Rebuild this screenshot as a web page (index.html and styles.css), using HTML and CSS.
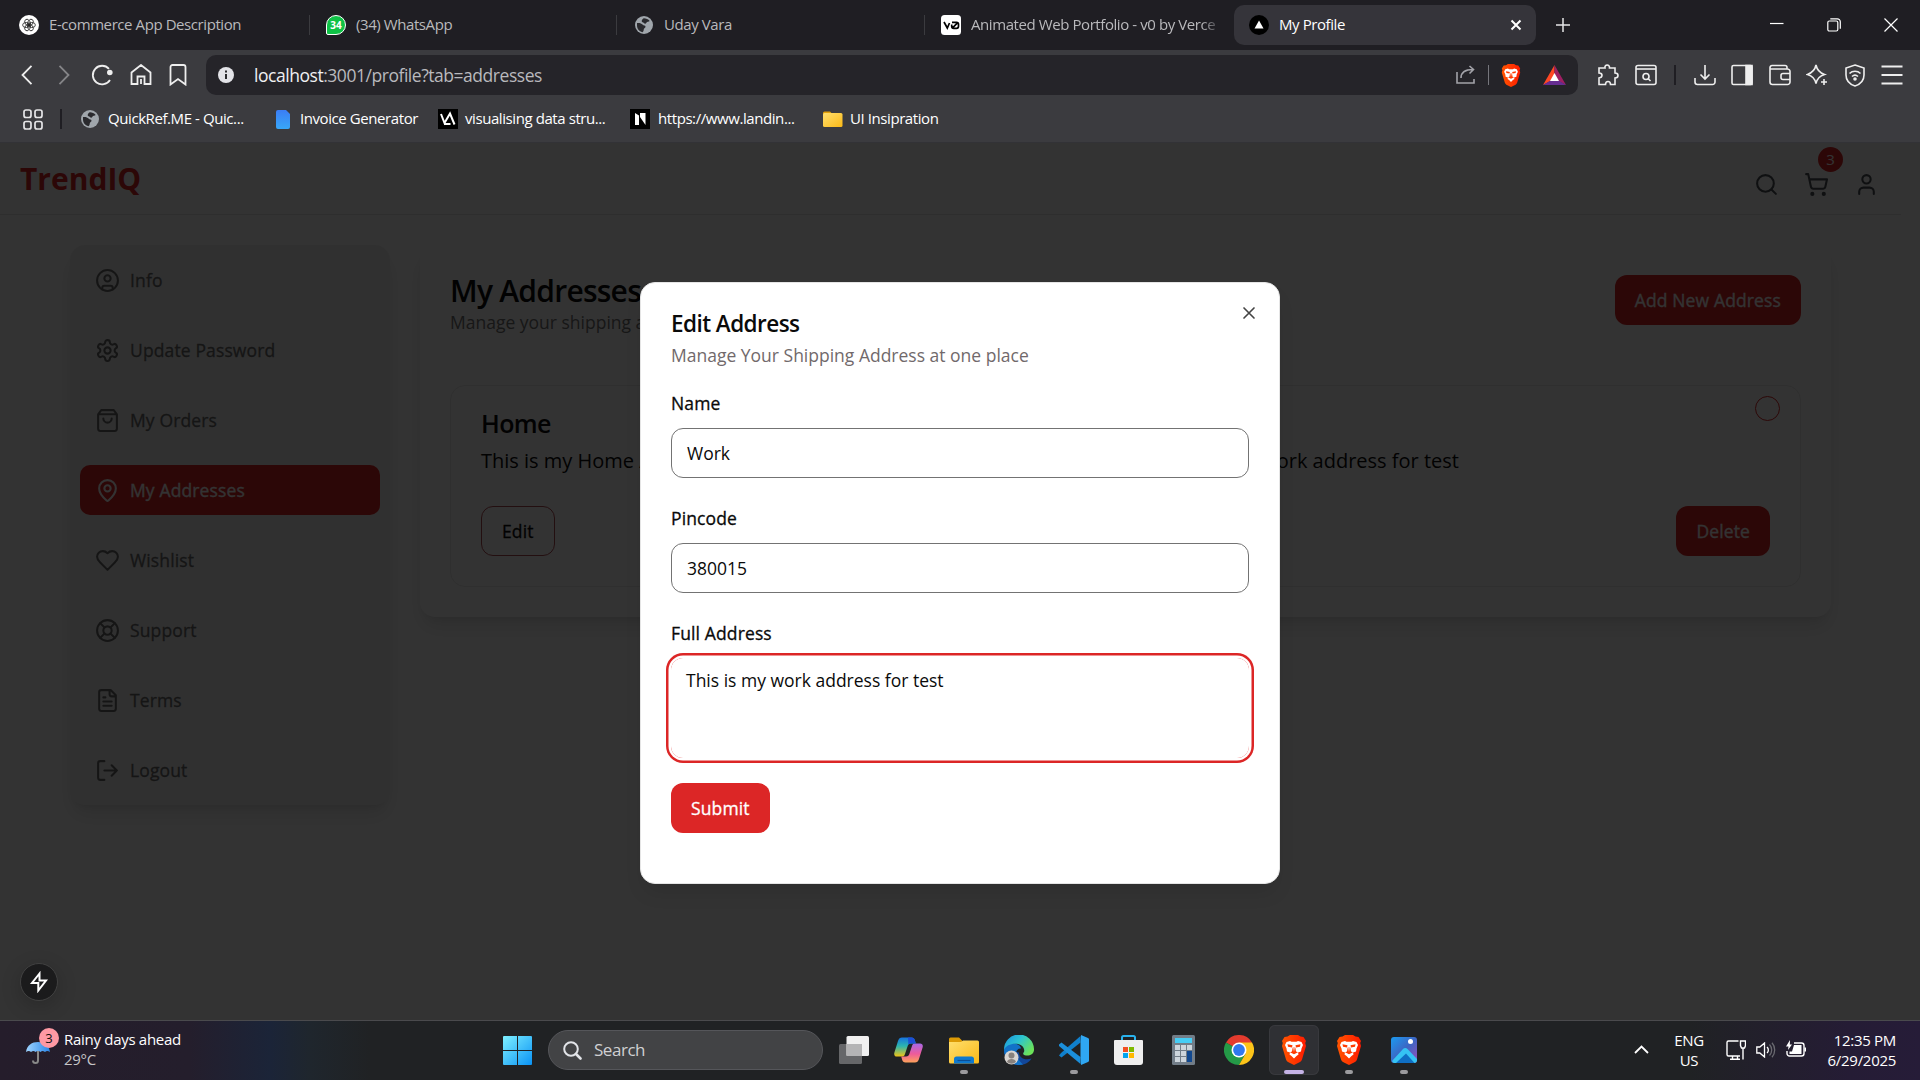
FILE: index.html
```html
<!DOCTYPE html>
<html lang="en">
<head>
<meta charset="utf-8">
<title>My Profile</title>
<link rel="stylesheet" href="styles.css">
</head>
<body>
<svg class="defs" width="0" height="0">
  <defs>
    <linearGradient id="brave" x1="0" x2="1"><stop offset="0" stop-color="#ff5500"/><stop offset="1" stop-color="#ff1b00"/></linearGradient>
    <linearGradient id="win" x1="0" y1="0" x2="1" y2="1"><stop offset="0" stop-color="#7ef0ff"/><stop offset="1" stop-color="#0a93f5"/></linearGradient>
    <linearGradient id="folder" x1="0" y1="0" x2="1" y2="1"><stop offset="0" stop-color="#ffdf6e"/><stop offset="1" stop-color="#fbb917"/></linearGradient>
    <linearGradient id="sheet" x1="0" y1="0" x2="0" y2="1"><stop offset="0" stop-color="#3b7df5"/><stop offset="1" stop-color="#38a7f8"/></linearGradient>
    <linearGradient id="copA" x1="0" y1="0" x2="0" y2="1"><stop offset="0" stop-color="#1673e0"/><stop offset=".45" stop-color="#2bb5b0"/><stop offset="1" stop-color="#f0c414"/></linearGradient>
    <linearGradient id="copB" x1="0" y1="0" x2="0" y2="1"><stop offset="0" stop-color="#a868e8"/><stop offset=".55" stop-color="#ee5b9a"/><stop offset="1" stop-color="#fda25a"/></linearGradient>
    <linearGradient id="edgeA" x1="0" y1="0" x2="1" y2=".6"><stop offset="0" stop-color="#1a8fe0"/><stop offset=".5" stop-color="#2cc4d0"/><stop offset="1" stop-color="#6be25a"/></linearGradient>
    <linearGradient id="photo" x1="0" y1="0" x2="1" y2="1"><stop offset="0" stop-color="#1b9bf0"/><stop offset=".5" stop-color="#3c66c4"/><stop offset="1" stop-color="#9a4fb8"/></linearGradient>
    <linearGradient id="brolly" x1="0" x2="1"><stop offset="0" stop-color="#9fd4ff"/><stop offset="1" stop-color="#2a86e8"/></linearGradient>
    <symbol id="lion" viewBox="0 0 26 30">
      <path fill="url(#brave)" d="M6.500 1.500 9 0h8l2.500 1.500L22.500 2 25 6l-.8 2 .8 3-4 13.500a5 5 0 0 1-2 2.500L13 30l-6-3a5 5 0 0 1-2-2.500L1 11l.8-3L1 6l2.500-4z"/>
      <path fill="#fff" d="M5.500 7 9 6l1.500.8h5L17 6l3.500 1L22 10l-1.500 3.500-.5 3-3 1 .5 2-2 1.500L13 23.500 10.500 21l-2-1.500.5-2-3-1-.5-3L4 10z"/>
      <path fill="#ff3a00" d="m6.500 9.300 5 1L11 12.500l-4-.8zM19.500 9.300l-5 1 .5 2.200 4-.8zM11.700 12.500h2.600l.7 4 2 .7-2 1.100-2 1-2-1-2-1.100 2-.7z"/>
      <path fill="#fff" d="m12.300 12.500.7 4.500.7-4.500z"/>
    </symbol>
    <symbol id="globe" viewBox="0 0 18 18">
      <circle cx="9" cy="9" r="9" fill="#a0a6ac"/>
      <path fill="#2a2a2e" d="M2 7c2.500-.3 4.500.2 5.500 1.500s2.800.6 3 2-1.800 1.800-1.800 3.200c0 1-.5 2-1.200 2.500C4 15.500 2 12.500 2 9.500zM9 2.300c1.800 0 4.500.9 5.700 2.800-1 .9-2.700.6-3.300 1.700S9.600 8 8.900 7 6.500 6.200 6.700 4.900 8 2.600 9 2.300z"/>
    </symbol>
  </defs>
</svg>

<header class="browser">
  <div class="tabs">
    <div class="tab t1">
      <svg width="20" height="20" viewBox="0 0 20 20"><circle cx="10" cy="10" r="10" fill="#fff"/><g fill="none" stroke="#222" stroke-width=".8"><ellipse cx="10" cy="7.200" rx="2.500" ry="3.600" transform="rotate(30 10 10)"/><ellipse cx="10" cy="7.200" rx="2.500" ry="3.600" transform="rotate(90 10 10)"/><ellipse cx="10" cy="7.200" rx="2.500" ry="3.600" transform="rotate(150 10 10)"/><ellipse cx="10" cy="7.200" rx="2.500" ry="3.600" transform="rotate(210 10 10)"/><ellipse cx="10" cy="7.200" rx="2.500" ry="3.600" transform="rotate(270 10 10)"/><ellipse cx="10" cy="7.200" rx="2.500" ry="3.600" transform="rotate(330 10 10)"/></g></svg>
      <span>E-commerce App Description</span>
    </div>
    <div class="tab t2">
      <b class="wa">34</b>
      <span>(34) WhatsApp</span>
    </div>
    <div class="tab t3">
      <svg width="18" height="18"><use href="#globe"/></svg>
      <span>Uday Vara</span>
    </div>
    <div class="tab t4">
      <svg width="20" height="20" viewBox="0 0 20 20"><rect width="20" height="20" rx="3.500" fill="#fff"/><path d="m3 7 3.300 6 2.200-5M11 7.300h4.500a2 2 0 0 1 2 2v2a2 2 0 0 1-2 2h-2.800a2 2 0 0 1-2-2V9.500M11.500 12.800l5-5" fill="none" stroke="#000" stroke-width="1.700"/></svg>
      <span class="fade">Animated Web Portfolio - v0 by Verce</span>
    </div>
    <div class="tab active">
      <svg width="20" height="20" viewBox="0 0 20 20"><circle cx="10" cy="10" r="10" fill="#000"/><path d="m10 5.500 4.500 8h-9z" fill="#fff"/></svg>
      <span>My Profile</span>
      <svg class="tab-close" width="12" height="12" viewBox="0 0 12 12"><path d="m1.500 1.500 9 9m0-9-9 9" stroke="#fff" stroke-width="2"/></svg>
    </div>
    <svg class="plus" width="14" height="14" viewBox="0 0 14 14"><path d="M7 0v14M0 7h14" stroke="#e6e6e8" stroke-width="1.500"/></svg>
    <div class="window-buttons">
      <svg width="14" height="14" viewBox="0 0 14 14"><path d="M0 5.500h13.500" stroke="#fff" stroke-width="1.200"/></svg>
      <svg width="14" height="14" viewBox="0 0 14 14"><g fill="none" stroke="#fff" stroke-width="1.200"><rect x=".8" y="3" width="10" height="10" rx="1.500"/><path d="M3.300.8h7a3 3 0 0 1 3 3v7"/></g></svg>
      <svg width="14" height="14" viewBox="0 0 14 14"><path d="m.5.500 13 13m0-13-13 13" stroke="#fff" stroke-width="1.200"/></svg>
    </div>
  </div>

  <div class="toolbar">
    <div class="nav">
      <svg width="20" height="20" viewBox="0 0 20 20"><path d="M14.500.8 5.500 10l9 9.200"/></svg>
      <svg class="dim" width="20" height="20" viewBox="0 0 20 20"><path d="m5.500.8 9 9.200-9 9.200"/></svg>
      <svg width="22" height="22" viewBox="0 0 22 22"><path d="M18 4.800A9.300 9.300 0 1 0 19 16"/><circle cx="18.800" cy="8.500" r="2.800" fill="#eee" stroke="none"/></svg>
      <svg width="22" height="22" viewBox="0 0 22 22"><path d="M1.500 8.500 11 1l9.500 7.500V20h-6v-7.500h-7V20h-6zM11 20v-5"/></svg>
      <svg width="18" height="22" viewBox="0 0 18 22"><path d="M1.500 20.500V3a2 2 0 0 1 2-2h11a2 2 0 0 1 2 2v17.500L9 15z"/></svg>
    </div>
    <div class="address">
      <svg width="16" height="16" viewBox="0 0 16 16"><circle cx="8" cy="8" r="8" fill="#e3e3e8"/><path d="M8 7v5M8 3.500v2" stroke="#2a2a2e" stroke-width="2"/></svg>
      <span class="url">localhost<i>:3001/profile?tab=addresses</i></span>
      <div class="address-actions">
        <svg class="line soft" width="20" height="20" viewBox="0 0 20 20"><path d="M1 7v11h17v-4M5 13c0-5 4-8.500 12-8.500M13.500 1l4 3.500-4 4"/></svg>
        <i class="sep"></i>
        <svg width="20" height="23" viewBox="0 0 26 30"><use href="#lion"/></svg>
        <svg width="23" height="20" viewBox="0 0 23 20"><path d="M11.500 0 0 20l11.500-6z" fill="#ff4724"/><path d="M11.500 0 23 20l-11.500-6z" fill="#9e1f63"/><path d="M0 20h23l-11.500-7z" fill="#662d91"/><path d="m11.500 8 4.500 8H7z" fill="#fff"/></svg>
      </div>
    </div>
    <div class="tools line">
      <svg width="22" height="22" viewBox="0 0 22 22"><path d="M2 4h6c-.8-4 5-4 4.500 0H18v5c4 0 4 5 0 5v6.500h-4.500c0-4-5-4-5 0H2V14c4-.5 4-5 0-5z"/></svg>
      <svg width="22" height="22" viewBox="0 0 22 22"><rect x="1" y="1.500" width="20" height="19" rx="2"/><path d="M1 5h20"/><circle cx="11" cy="12.500" r="3"/><path d="m13 14.500 2.500 2.500"/></svg>
      <i class="sep dark"></i>
      <svg width="22" height="22" viewBox="0 0 22 22"><path d="M11 1v14m-4.500-4.500L11 15l4.500-4.500M1 14v4a2.500 2.500 0 0 0 2.500 2.500h15A2.500 2.500 0 0 0 21 18v-4"/></svg>
      <svg width="22" height="22" viewBox="0 0 22 22"><rect x="1" y="1.500" width="20" height="19" rx="1.500"/><path d="M15 1.500h6v19h-6z" fill="#eee"/></svg>
      <svg width="22" height="22" viewBox="0 0 22 22"><path d="M18 5V3.500a2 2 0 0 0-2-2H3a2 2 0 0 0-2 2V18a2.500 2.500 0 0 0 2.500 2.500h15A2.500 2.500 0 0 0 21 18V7.500A2.500 2.500 0 0 0 18.500 5H1M21 9.500h-7a2 2 0 0 0-2 2v2a2 2 0 0 0 2 2h7"/></svg>
      <svg width="22" height="22" viewBox="0 0 22 22"><path d="M10 1c1 5 3 7.500 8.500 9.500-5 1.500-7.500 4-8.500 9-1-5-3.500-7.500-8.500-9C6.500 8.500 9 6 10 1zM18 15v6m-3-3h6"/></svg>
      <svg width="22" height="23" viewBox="0 0 22 23"><path d="m11 1 9 3v7c0 6-4.500 9.500-9 11-4.500-1.500-9-5-9-11V4zM5.500 9.500c3-3 8-3 11 0M8 12.500c1.800-1.600 4.200-1.600 6 0"/><circle cx="11" cy="15" r="1" fill="#eee"/></svg>
      <svg width="22" height="20" viewBox="0 0 22 20"><path d="M.5 1.500h21M.5 10h21M.5 18.500h21" stroke-width="2"/></svg>
    </div>
  </div>

  <div class="bookmarks">
    <svg class="apps" width="20" height="21" viewBox="0 0 20 21"><g fill="none" stroke="#e6e6e8" stroke-width="1.700"><rect x="1" y="1" width="7" height="7.500" rx="2"/><rect x="12" y="1" width="7" height="7.500" rx="2"/><rect x="1" y="12.500" width="7" height="7.500" rx="2"/><rect x="12" y="12.500" width="7" height="7.500" rx="2"/></g></svg>
    <i class="sep dark"></i>
    <div class="bm b1"><svg width="18" height="18"><use href="#globe"/></svg><span>QuickRef.ME - Quic...</span></div>
    <div class="bm b2"><svg width="14" height="19" viewBox="0 0 14 19"><path d="M2 0h8l4 4v13a2 2 0 0 1-2 2H2a2 2 0 0 1-2-2V2a2 2 0 0 1 2-2z" fill="url(#sheet)"/></svg><span>Invoice Generator</span></div>
    <div class="bm b3"><svg width="20" height="20" viewBox="0 0 20 20"><path d="M0 0h20v20H0z"/><path d="m3 5 3.500 9L12 4.500l4.500 11M6 15h6.500" fill="none" stroke="#fff" stroke-width="2"/></svg><span>visualising data stru...</span></div>
    <div class="bm b4"><svg width="20" height="20" viewBox="0 0 20 20"><path d="M0 0h20v20H0z"/><path d="M5 16V4l4 2.500V16zM10 4h5.500v12L10 8z" fill="#fff"/></svg><span>https://www.landin...</span></div>
    <div class="bm b5"><svg width="20" height="16" viewBox="0 0 20 16"><path d="M0 2a1.500 1.500 0 0 1 1.500-1.500H7L8.500 2v3H0z" fill="#e3a008"/><rect y="2" width="19.500" height="14" rx="1.500" fill="url(#folder)"/></svg><span>UI Insipration</span></div>
  </div>
</header>

<main class="page">
  <div class="site">
    <div class="site-header">
      <div class="logo">TrendIQ</div>
      <div class="header-icons stroke">
        <svg width="25" height="25" viewBox="0 0 24 24"><circle cx="11" cy="11" r="8"/><path d="m21 21-4.300-4.300"/></svg>
        <div class="cart">
          <svg width="25" height="25" viewBox="0 0 24 24"><circle cx="8" cy="21" r="1"/><circle cx="19" cy="21" r="1"/><path d="M2.050 2.050h2l2.660 12.420a2 2 0 0 0 2 1.580h9.780a2 2 0 0 0 1.950-1.570l1.650-7.430H5.120"/></svg>
          <span class="badge">3</span>
        </div>
        <svg width="25" height="25" viewBox="0 0 24 24"><path d="M19 21v-2a4 4 0 0 0-4-4H9a4 4 0 0 0-4 4v2"/><circle cx="12" cy="7" r="4"/></svg>
      </div>
    </div>
    <div class="columns">
      <nav class="sidebar stroke">
        <a><svg width="25" height="25" viewBox="0 0 24 24"><circle cx="12" cy="12" r="10"/><circle cx="12" cy="10" r="3"/><path d="M7 20.662V19a2 2 0 0 1 2-2h6a2 2 0 0 1 2 2v1.662"/></svg><span>Info</span></a>
        <a><svg width="25" height="25" viewBox="0 0 24 24"><path d="M12.220 2h-.44a2 2 0 0 0-2 2v.18a2 2 0 0 1-1 1.730l-.43.25a2 2 0 0 1-2 0l-.15-.08a2 2 0 0 0-2.730.73l-.22.38a2 2 0 0 0 .73 2.730l.15.1a2 2 0 0 1 1 1.720v.51a2 2 0 0 1-1 1.740l-.15.09a2 2 0 0 0-.73 2.730l.22.38a2 2 0 0 0 2.730.73l.15-.08a2 2 0 0 1 2 0l.43.25a2 2 0 0 1 1 1.730V20a2 2 0 0 0 2 2h.44a2 2 0 0 0 2-2v-.18a2 2 0 0 1 1-1.730l.43-.25a2 2 0 0 1 2 0l.15.08a2 2 0 0 0 2.730-.73l.22-.39a2 2 0 0 0-.73-2.730l-.15-.08a2 2 0 0 1-1-1.740v-.5a2 2 0 0 1 1-1.740l.15-.09a2 2 0 0 0 .73-2.730l-.22-.38a2 2 0 0 0-2.730-.73l-.15.08a2 2 0 0 1-2 0l-.43-.25a2 2 0 0 1-1-1.730V4a2 2 0 0 0-2-2z"/><circle cx="12" cy="12" r="3"/></svg><span>Update Password</span></a>
        <a><svg width="25" height="25" viewBox="0 0 24 24"><path d="M6 2 3 6v14a2 2 0 0 0 2 2h14a2 2 0 0 0 2-2V6l-3-4ZM3 6h18M16 10a4 4 0 0 1-8 0"/></svg><span>My Orders</span></a>
        <a class="current"><svg width="25" height="25" viewBox="0 0 24 24"><path d="M20 10c0 4.993-5.539 10.193-7.399 11.799a1 1 0 0 1-1.202 0C9.539 20.193 4 14.993 4 10a8 8 0 0 1 16 0"/><circle cx="12" cy="10" r="3"/></svg><span>My Addresses</span></a>
        <a><svg width="25" height="25" viewBox="0 0 24 24"><path d="M19 14c1.490-1.460 3-3.210 3-5.500A5.500 5.500 0 0 0 16.500 3c-1.760 0-3 .5-4.500 2-1.500-1.500-2.740-2-4.500-2A5.500 5.500 0 0 0 2 8.500c0 2.300 1.500 4.050 3 5.500l7 7Z"/></svg><span>Wishlist</span></a>
        <a><svg width="25" height="25" viewBox="0 0 24 24"><circle cx="12" cy="12" r="10"/><circle cx="12" cy="12" r="4"/><path d="m4.930 4.930 4.240 4.240M14.830 9.170l4.240-4.240M14.830 14.830l4.240 4.240M9.170 14.830l-4.240 4.240"/></svg><span>Support</span></a>
        <a><svg width="25" height="25" viewBox="0 0 24 24"><path d="M15 2H6a2 2 0 0 0-2 2v16a2 2 0 0 0 2 2h12a2 2 0 0 0 2-2V7ZM14 2v4a2 2 0 0 0 2 2h4M10 9H8M16 13H8M16 17H8"/></svg><span>Terms</span></a>
        <a><svg width="25" height="25" viewBox="0 0 24 24"><path d="M9 21H5a2 2 0 0 1-2-2V5a2 2 0 0 1 2-2h4M16 17l5-5-5-5M21 12H9"/></svg><span>Logout</span></a>
      </nav>
      <section class="panel">
        <div class="panel-head">
          <div>
            <h1>My Addresses</h1>
            <p class="muted">Manage your shipping addresses</p>
          </div>
          <button class="primary">Add New Address</button>
        </div>
        <article class="address-card">
          <div class="card-head"><h2>Home</h2><i class="radio"></i></div>
          <p class="lines"><span>This is my Home Address</span><span>This is my work address for test</span></p>
          <div class="card-actions"><button class="outline">Edit</button><button class="primary">Delete</button></div>
        </article>
      </section>
    </div>
  </div>

  <div class="overlay">
    <form class="dialog">
      <svg class="dialog-close" width="20" height="20" viewBox="0 0 24 24"><path d="M18 6 6 18M6 6l12 12"/></svg>
      <h3>Edit Address</h3>
      <p class="hint">Manage Your Shipping Address at one place</p>
      <div class="field"><label>Name</label><div class="input">Work</div></div>
      <div class="field"><label>Pincode</label><div class="input">380015</div></div>
      <div class="field"><label>Full Address</label><div class="input area focused">This is my work address for test</div></div>
      <button type="button" class="primary submit">Submit</button>
    </form>
  </div>

  <div class="dev-badge"><svg width="20" height="22" viewBox="0 0 20 22"><path d="M10.500 2.500 3 12h6.300v7.500L17 9.500h-6.500z"/></svg></div>
</main>

<footer class="taskbar">
  <div class="weather">
    <div class="brolly">
      <svg width="24" height="24" viewBox="0 0 24 24"><path d="M0 12C1 5 6 2 12 2s11 3 12 10c-2-1.300-3.500-1.300-5 0-2-1.300-3-1.300-4.500 0-1.800-1.300-3.200-1.300-5 0-1.500-1.300-2.700-1.300-4.500 0-1.500-1.300-3-1.300-5 0z" fill="url(#brolly)"/><path d="M12 11v9.500a2.500 2.500 0 0 1-5 0" fill="none" stroke="#888" stroke-width="2"/></svg>
      <span class="count">3</span>
    </div>
    <div class="weather-text">Rainy days ahead<br><em>29°C</em></div>
  </div>

  <div class="dock">
    <svg class="start" width="29" height="29" viewBox="0 0 29 29"><path d="M1 0h13v14H0V1a1 1 0 0 1 1-1zM15 0h13a1 1 0 0 1 1 1v13H15zM0 15h14v14H1a1 1 0 0 1-1-1zM15 15h14v13a1 1 0 0 1-1 1H15z" fill="url(#win)"/></svg>
    <div class="search"><svg width="19" height="19" viewBox="0 0 19 19"><circle cx="8" cy="8" r="6.800" fill="none" stroke="#e2e4e8" stroke-width="2"/><path d="m13 13 4.500 4.500" stroke="#e2e4e8" stroke-width="2.600" stroke-linecap="round"/></svg><span>Search</span></div>
    <div class="app"><svg width="30" height="28" viewBox="0 0 30 28"><rect y="8" width="23" height="20" rx="1.500" fill="#666769"/><rect x="7.500" width="22.500" height="20" rx="1.500" fill="#f0f0f0"/><path d="M7.500 8H23v12H7.500z" fill="#b4b4b5"/></svg></div>
    <div class="app"><svg width="29" height="26" viewBox="0 0 29 26"><path d="M8 .5h9.500c2 0 2.800 1 3.300 2.500l1 3.500H17c-2 0-3 1-3.500 3L11 17c-.6 2-1.500 2.500-3 2.500H3C.8 19.500-.3 18 .4 15.500L4 4C4.800 1.500 6 .5 8 .5z" fill="url(#copA)"/><path d="M21 25.500h-9.500c-2 0-2.800-1-3.300-2.500l-1-3.500H12c2 0 3-1 3.500-3L18 9c.6-2 1.500-2.500 3-2.500h5c2.200 0 3.300 1.500 2.600 4L25 22c-.8 2.500-2 3.500-4 3.500z" fill="url(#copB)"/><path d="M14 .5h3.500c2 0 2.800 1 3.300 2.500l1 3.500H17c-1.200 0-2 .4-2.600 1.200z" fill="#1c4fd6"/></svg></div>
    <div class="app run"><svg width="30" height="27" viewBox="0 0 30 27"><path d="M0 2A1.500 1.500 0 0 1 1.500.5H10L13 3.500V8H0z" fill="#dc9a05"/><path d="M0 5h12l2-1.500h14.500A1.500 1.500 0 0 1 30 5v20a1.500 1.500 0 0 1-1.500 1.500h-27A1.500 1.500 0 0 1 0 25z" fill="url(#folder)"/><path d="M5 26.500V22a2.500 2.500 0 0 1 2.500-2.500h15A2.500 2.500 0 0 1 25 22v4.500z" fill="#0f79cf"/><path d="M8.500 23.500h13" stroke="#0a4f96" stroke-width="1.200"/></svg></div>
    <div class="app"><svg width="30" height="30" viewBox="0 0 30 30"><path d="M0 15c0 9 7 15 15 15 6 0 10-2.500 12.500-6.500-7 2.500-12.500-1-12.500-6z" fill="#12479a"/><path d="M0 15c1-5 6-7.500 11-6.500 4 .8 6 3 6 5-5-.5-7 6-2 11.500 1.500 2 3 4 4 4.500C8 32 0 24 0 15z" fill="#1272c8"/><path d="M0 15A15 15 0 0 1 30 14c.3 5-4 7-8 6.500-3-.4-3.500-2-2-3.500 1-3-1-7-6-8C8 8 2 10 0 15z" fill="url(#edgeA)"/><circle cx="7.500" cy="22.500" r="7" fill="#d8d5d2"/><circle cx="7.500" cy="20.500" r="3" fill="#87817d"/><path d="M3 27c.5-4 8.500-4 9 0a7 7 0 0 1-9 0z" fill="#87817d"/></svg></div>
    <div class="app run"><svg width="30" height="30" viewBox="0 0 30 30"><path d="m0 20.500 2.500 2 19-15V1L2 18z" fill="#1080cc"/><path d="M0 9.500 2.500 7.500 21.500 22v7L0 11z" fill="#1b8fdb"/><path d="M22 0 21.500 8v14l.5 8 7-3a2 2 0 0 0 1-2V5a2 2 0 0 0-1-2z" fill="#2fa7f3"/></svg></div>
    <div class="app"><svg width="29" height="30" viewBox="0 0 29 30"><path d="M8 6V2.500A1.500 1.500 0 0 1 9.500 1h10A1.500 1.500 0 0 1 21 2.500V6" fill="none" stroke="#29b3ee" stroke-width="2"/><path d="M0 6a1 1 0 0 1 1-1h27a1 1 0 0 1 1 1v21a3 3 0 0 1-3 3H3a3 3 0 0 1-3-3z" fill="#efefef"/><path d="M9 12h5v5H9z" fill="#f25022"/><path d="M15 12h5v5h-5z" fill="#7fba00"/><path d="M9 18h5v5H9z" fill="#00a4ef"/><path d="M15 18h5v5h-5z" fill="#ffb900"/></svg></div>
    <div class="app"><svg width="23" height="30" viewBox="0 0 23 30"><rect width="23" height="30" rx="1.500" fill="#727d88"/><path d="M3 3h17v5H3z" fill="#46cdf5"/><path d="M3 10h5v5H3zM9 10h5v5H9zM15 10h5v5h-5zM3 16h5v5H3zM9 16h5v5H9zM3 22h5v5H3zM9 22h5v5H9z" fill="#cdd5dc"/><path d="M15 16h5v11h-5z" fill="#11488f"/></svg></div>
    <div class="app"><svg width="30" height="30" viewBox="0 0 30 30"><path d="M15 15 2 7.500a15 15 0 0 1 26 0z" fill="#e33b2e"/><path d="M15 15 2 7.500A15 15 0 0 0 15 30l6.500-11.300z" fill="#249a47"/><path d="M28 7.500H15L21.500 18.700 15 30A15 15 0 0 0 28 7.500z" fill="#fcc419"/><circle cx="15" cy="15" r="7.500" fill="#fff"/><circle cx="15" cy="15" r="5.900" fill="#3078ee"/></svg></div>
    <div class="app run focus"><svg width="26" height="30"><use href="#lion"/></svg></div>
    <div class="app run"><svg width="26" height="30"><use href="#lion"/></svg></div>
    <div class="app run"><svg width="26" height="26" viewBox="0 0 26 26"><rect width="26" height="26" rx="3" fill="url(#photo)"/><path d="M1 24 12 12a3 3 0 0 1 4.500 0L26 22v1a3 3 0 0 1-3 3H3a3 3 0 0 1-2-2z" fill="#35c3f3"/><path d="m5 26 10-9.500L23.500 26z" fill="#0f6fc4"/><circle cx="19.500" cy="4.500" r="2.500" fill="#fff"/></svg></div>
  </div>

  <div class="tray">
    <svg class="chev" width="15" height="9" viewBox="0 0 15 9"><path d="m1 8 6.500-6.500L14 8" fill="none" stroke="#fff" stroke-width="1.800"/></svg>
    <div class="lang">ENG<br>US</div>
    <svg class="net" width="20" height="20" viewBox="0 0 20 20"><g fill="none" stroke="#fff" stroke-width="1.400"><path d="M12.500 1H2.500A1.500 1.500 0 0 0 1 2.500v12A1.500 1.500 0 0 0 2.500 16H14M4 19.300h10M6.500 16v3M11.500 16v3M17 8v11.500"/><path d="M14.500 1h5v4.500L18.500 8h-3l-1-2.500z"/></g></svg>
    <svg class="vol" width="20" height="16" viewBox="0 0 20 16"><g fill="none" stroke="#fff" stroke-width="1.300"><path d="M.8 5v6h3L8.500 15V1L3.800 5zM11 5a4 4 0 0 1 0 6"/><path d="M13.500 2.500a8 8 0 0 1 0 11M16 .8a11 11 0 0 1 0 14.400" stroke="#6a6a70"/></g></svg>
    <svg class="bat" width="20" height="17" viewBox="0 0 20 17"><path d="M8 3h7.500A2.500 2.500 0 0 1 18 5.500v8a2.500 2.500 0 0 1-2.500 2.500H3.500A2.500 2.500 0 0 1 1 13.500V11" fill="none" stroke="#fff" stroke-width="1.400"/><path d="M8 5h7.500v9H3.500v-2.500H6zM4 0 0 6.500h2.500L2 10l4-5.500H3.800zM18.500 7.500H20v4h-1.500z" fill="#fff"/></svg>
    <div class="clock">12:35 PM<br>6/29/2025</div>
  </div>
</footer>
</body>
</html>
```
FILE: styles.css
```css
* { box-sizing: border-box; margin: 0; }
body {
  width: 1920px; height: 1080px; overflow: hidden;
  display: flex; flex-direction: column;
  font-family: "Open Sans", "Noto Sans", sans-serif;
  color: #0a0a0a; background: #333;
}
svg { display: block; flex: none; }
i, em { font-style: normal; }
button { font: inherit; }
.defs { position: absolute; }

/* Browser chrome */
.browser { flex: none; height: 143px; background: #3b3b3f; border-bottom: 1px solid #323236; font-size: 15px; letter-spacing: -.42px; white-space: nowrap; }
.tabs { display: flex; height: 50px; background: #1f1e23; align-items: center; color: #b9b9bc; }
.tab { display: flex; align-items: center; gap: 10px; height: 20px; line-height: 20px; border-right: 1px solid #3b3b3f; }
.tab > span { padding-bottom: 2px; }
.t1 { width: 310px; padding-left: 19px; }
.t2 { width: 307px; padding-left: 16px; }
.t3 { width: 308px; padding-left: 18px; gap: 11px; }
.t4 { width: 309px; padding-left: 16px; border: 0; }
.fade { width: 250px; mask-image: linear-gradient(90deg, #000 230px, transparent 252px); }
.tab.active { width: 302px; height: 40px; border: 0; border-radius: 10px; background: #35343a; color: #fff; padding: 0 14px 0 15px; }
.tab-close { margin-left: auto; }
.wa { width: 20px; height: 20px; border-radius: 10px 10px 10px 2px; border: 1px solid #fff; background: #0fc246; color: #fff; font-size: 10px; font-weight: 700; letter-spacing: 0; text-align: center; line-height: 18px; }
.plus { margin-left: 20px; }
.window-buttons { display: flex; gap: 43px; margin-left: auto; margin-right: 22px; }

.toolbar { display: flex; height: 50px; align-items: center; }
.nav { display: flex; align-items: center; width: 206px; padding-left: 17px; gap: 17px; fill: none; stroke: #eee; stroke-width: 1.800; }
.nav .dim { stroke: #858588; }
.address { display: flex; align-items: center; width: 1372px; height: 40px; border-radius: 10px; background: #252429; padding: 0 12px; }
.url { font-size: 17.500px; letter-spacing: -.46px; color: #f0f0f2; margin-left: 20px; }
.url i { color: #b9b9bd; }
.address-actions { display: flex; align-items: center; gap: 12px; margin-left: auto; }
.address-actions svg:nth-of-type(3) { margin-left: 10px; }
.line { fill: none; stroke: #eee; stroke-width: 1.600; }
.soft { stroke: #a2a2a8; }
.sep { flex: none; width: 1px; height: 20px; background: #76767c; }
.sep.dark { width: 2px; background: #1f1e23; }
.tools { display: flex; align-items: center; gap: 15.500px; padding-left: 19px; }
.tools .sep { margin: 0 2px; }

.bookmarks { display: flex; align-items: center; height: 38px; padding-left: 23px; color: #fff; }
.bookmarks .sep { margin: 0 19px 0 17px; }
.bm { display: flex; align-items: center; line-height: 20px; gap: 8px; }
.bm span { padding-bottom: 2px; }
.b1 { width: 195px; gap: 9px; }
.b2 { width: 162px; gap: 10px; }
.b3 { width: 192px; gap: 7px; }
.b4 { width: 193px; }
.b5 { gap: 7px; }

/* Profile page */
.page { position: relative; flex: 1; background: #fff; overflow: hidden; }
.site { width: 1901px; font-size: 17.500px; }
.site-header { display: flex; justify-content: space-between; height: 72px; padding: 15px 22px 0 20px; border-bottom: 1px solid #e5e5e5; }
.logo { font-size: 30px; font-weight: 700; line-height: 42px; color: #dc2626; align-self: flex-start; }
.stroke svg { fill: none; stroke: currentColor; stroke-width: 2; stroke-linecap: round; stroke-linejoin: round; }
.header-icons { display: flex; gap: 25px; padding-top: 14px; color: #4b5058; }
.cart { position: relative; }
.badge { position: absolute; left: 14px; top: -25px; width: 25px; height: 25px; border-radius: 50%; background: #dc2626; color: #fff; font-size: 15px; line-height: 25px; text-align: center; }
.columns { display: flex; gap: 30px; padding: 30px 70px; align-items: flex-start; }
.sidebar, .panel { border-radius: 15px; box-shadow: 0 12px 19px -2px rgba(0,0,0,.1), 0 5px 8px -5px rgba(0,0,0,.1); }
.sidebar { display: flex; flex-direction: column; gap: 20px; width: 320px; padding: 10px; background: #f1f1f1; color: #6b6b6b; }
.sidebar a { display: flex; align-items: center; gap: 10px; height: 50px; padding: 0 15px; border-radius: 10px; }
.sidebar .current { background: #dc2626; color: #fff; }
/* Medium weight, drawn as a thin outline on the regular face */
.sidebar span, button, label { letter-spacing: .13px; -webkit-text-stroke: .3px currentColor; }
.panel { flex: 1; height: 372px; padding: 30px; background: #fff; }
.panel-head { display: flex; justify-content: space-between; height: 110px; align-items: flex-start; }
h1 { font-size: 30px; font-weight: 600; line-height: 31px; letter-spacing: -.75px; }
.muted { line-height: 25px; margin-top: 4px; color: #737373; }
button { height: 50px; border-radius: 12px; border: 0; padding: 0 20px; }
.primary { background: #dc2626; color: #fff; }
.outline { background: transparent; border: 1px solid #b04a52; color: #0a0a0a; }
.address-card { height: 202px; padding: 25px 30px 0; border: 1px solid #e8e8e8; border-radius: 15px; }
.card-head { display: flex; justify-content: space-between; height: 25px; }
h2 { font-size: 25px; font-weight: 600; line-height: 24px; letter-spacing: -.6px; }
.radio { width: 25px; height: 25px; margin: -15px -10px 0 0; border-radius: 50%; border: 1px solid #dc2626; }
.lines { display: flex; justify-content: space-between; width: 978px; margin-top: 10px; font-size: 20px; line-height: 30px; }
.card-actions { display: flex; justify-content: space-between; margin-top: 30px; }

.overlay { position: absolute; inset: 0; background: rgba(0,0,0,.8); display: grid; justify-content: center; align-content: start; padding-top: 139px; font-size: 17.500px; }
.dialog { position: relative; width: 640px; height: 602px; padding: 30px; background: #fff; border: 1px solid #e5e5e5; border-radius: 15px; box-shadow: 0 12px 19px -4px rgba(0,0,0,.1); }
.dialog-close { position: absolute; right: 20px; top: 20px; fill: none; stroke: #444; stroke-width: 2; stroke-linecap: round; }
h3 { font-size: 22.500px; font-weight: 600; line-height: 22.500px; letter-spacing: -.55px; }
.hint { margin: 7px 0 23px; line-height: 25px; color: #71696b; }
.field { margin-bottom: 28px; }
label { display: inline-block; line-height: 25px; margin-bottom: 12px; vertical-align: top; }
.input { height: 50px; border: 1px solid #737373; border-radius: 12px; padding: 0 15px; line-height: 48px; }
.area { height: 100px; line-height: 25px; padding: 9px 14px; }
.focused { border-color: transparent; box-shadow: 0 0 0 2.500px #fff, 0 0 0 5px #dc2626; }
.submit { margin-top: -3px; display: block; }

.dev-badge { position: absolute; left: 20px; top: 820px; width: 38px; height: 38px; border-radius: 50%; background: #1b1b1c; border: 1px solid #414141; display: grid; place-items: center; box-shadow: 0 5px 20px rgba(0,0,0,.2); }
.dev-badge svg { fill: none; stroke: #fff; stroke-width: 2; }

/* Taskbar */
.taskbar { flex: none; height: 60px; display: flex; border-top: 1px solid #4a4a4d; color: #fff; font-size: 15px; line-height: 20px; letter-spacing: -.29px; white-space: nowrap;
  background: linear-gradient(90deg, #251d2b 0, #241e2c 190px, #1b2438 270px, #1f262d 310px, #202224 370px, #202224 1690px, #251c35 1850px, #261c38 1920px); }
.weather { display: flex; width: 503px; padding: 8px 0 0 26px; gap: 14px; }
.brolly { position: relative; padding-top: 11px; }
.count { position: absolute; left: 13px; top: -1px; width: 20px; height: 20px; border-radius: 50%; background: #ff99a4; color: #111; text-align: center; font-size: 13px; letter-spacing: 0; }
.weather-text em { color: #c6c6c8; }
.dock { display: flex; align-items: center; width: 1100px; height: 58px; }
.search { display: flex; align-items: center; gap: 12px; width: 275px; height: 40px; margin: 0 3px 0 16px; padding-left: 14px; border-radius: 20px; background: #424345; border: 1px solid #55565a; font-size: 17px; letter-spacing: -.47px; color: #d0d0d2; }
.app { position: relative; width: 50px; height: 50px; margin: 0 2.500px; display: grid; place-items: center; border-radius: 6px; }
.run::after { content: ""; position: absolute; left: 21px; bottom: 1px; width: 8px; height: 4px; border-radius: 2px; background: #9b9b9e; }
.focus { background: #2f3034; box-shadow: inset 0 0 0 1px #38393d; }
.focus::after { left: 15px; width: 20px; background: #c5b3e6; }
.tray { display: flex; align-items: center; flex: 1; height: 57px; padding-left: 31px; padding-right: 24px; }
.lang { text-align: center; margin-left: 25px; width: 30px; }
.net { margin-left: 22px; }
.vol { margin-left: 10px; }
.bat { margin-left: 10px; margin-top: -3px; }
.clock { margin-left: auto; text-align: right; }
```
